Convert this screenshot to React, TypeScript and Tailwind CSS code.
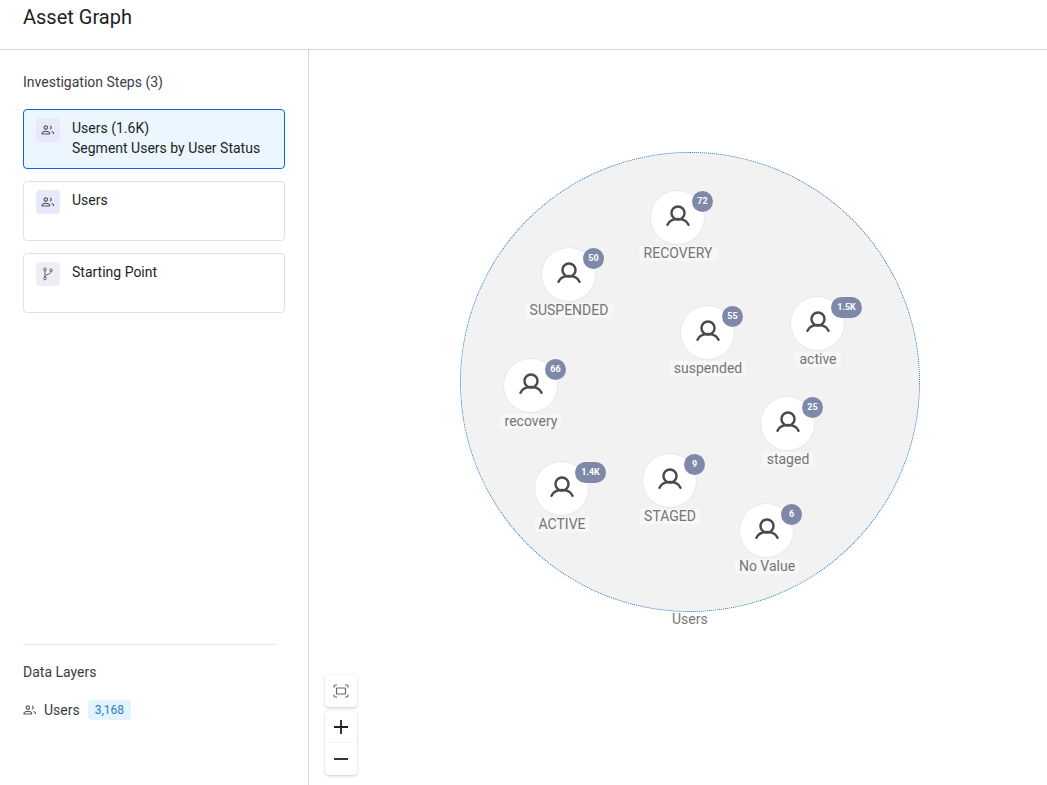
import React from 'react';

const FONT = "font-['Roboto',sans-serif]";

const UsersGlyph = ({ className }: { className?: string }) => (
  <svg viewBox="0 0 14 14" fill="none" stroke="currentColor" strokeWidth="1.2" className={className}>
    <circle cx="4.800" cy="4.600" r="1.700" />
    <path d="M9 3c.9.300 1.300.900 1.300 1.600S9.900 5.900 9 6.200" />
    <path d="M1 11v-.6c0-1.300 1.600-2 3.800-2s3.800.7 3.800 2v.6z" />
    <path d="M10.500 8.500c1.200.300 2.200.9 2.200 2.500" />
  </svg>
);

const BranchGlyph = ({ className }: { className?: string }) => (
  <svg viewBox="0 0 16 16" fill="none" stroke="currentColor" strokeWidth="1.100" className={className}>
    <circle cx="4.500" cy="2.800" r="1.500" />
    <circle cx="4.500" cy="13.200" r="1.500" />
    <circle cx="11.500" cy="3.800" r="1.500" />
    <path d="M4.500 4.300v7.400M11.500 5.300c0 3.200-7 2.700-7 6.400" />
  </svg>
);

const StepCard = ({
  active,
  icon,
  iconBg,
  title,
  sub,
}: {
  active?: boolean;
  icon: React.ReactNode;
  iconBg: string;
  title: string;
  sub?: string;
}) => (
  <div
    className={
      active
        ? 'flex h-[60px] gap-3 rounded border border-[#1662dd] bg-[#ebf6ff] px-3 py-2'
        : 'flex h-[60px] gap-3 rounded border border-[#dfe1e5] bg-white px-3 py-2'
    }
  >
    <div className={`flex h-6 w-6 shrink-0 items-center justify-center rounded ${iconBg} text-[#5a5d68]`}>{icon}</div>
    <div className="text-sm leading-5 text-[#1d1f24]">
      <div>{title}</div>
      {sub && <div>{sub}</div>}
    </div>
  </div>
);

const nodes = [
  { label: 'RECOVERY', count: '72', x: 678, y: 218 },
  { label: 'SUSPENDED', count: '50', x: 569, y: 275 },
  { label: 'suspended', count: '55', x: 708, y: 333 },
  { label: 'active', count: '1.5K', x: 818, y: 324 },
  { label: 'recovery', count: '66', x: 531, y: 386 },
  { label: 'staged', count: '25', x: 788, y: 424 },
  { label: 'ACTIVE', count: '1.4K', x: 562, y: 489 },
  { label: 'STAGED', count: '9', x: 670, y: 481 },
  { label: 'No Value', count: '6', x: 767, y: 531 },
];

const GraphNode = ({ label, count, x, y }: { label: string; count: string; x: number; y: number }) => {
  const wide = count.length > 2;
  return (
    <div className="absolute h-0 w-0" style={{ left: x - 309, top: y - 50 }}>
      <div className="absolute -left-[28px] -top-[28px] flex h-[55px] w-[55px] items-center justify-center rounded-full border border-[#e6e8f2] bg-white text-[#4a4a4a]">
        <svg viewBox="0 0 24 24" fill="none" stroke="currentColor" strokeWidth="2.100" strokeLinecap="round" className="-mt-1 h-7 w-7">
          <circle cx="12" cy="9.400" r="5.600" />
          <path d="M3 19.500c1.200-3 4.600-5 9-5s7.800 2 9 5" />
        </svg>
      </div>
      <div
        className={
          wide
            ? 'absolute left-[13px] -top-[27px] flex h-[21px] w-[31px] items-center justify-center rounded-full bg-[#7e89a9] text-[9px] font-bold text-white'
            : 'absolute left-[14px] -top-[27px] flex h-[21px] w-[21px] items-center justify-center rounded-full bg-[#7e89a9] text-[9px] font-bold text-white'
        }
      >
        {count}
      </div>
      <div className="absolute left-0 top-[28px] -translate-x-1/2 whitespace-nowrap bg-[#f7f7f7] px-1 text-sm leading-[15px] text-[#757575]">
        {label}
      </div>
    </div>
  );
};

export default function App() {
  return (
    <div className={`${FONT} flex h-[785px] w-[1047px] flex-col overflow-hidden bg-white`}>
      <header className="h-[50px] shrink-0 border-b border-[#d3d6e0] px-[23px] pt-[5px]">
        <h1 className="text-xl leading-6 text-[#1d1f24]">Asset Graph</h1>
      </header>
      <div className="flex min-h-0 flex-1">
        <aside className="flex w-[309px] shrink-0 flex-col border-r border-[#d3d6e0] pb-[65px] pl-[23px] pr-[23px] pt-6">
          <div className="text-sm leading-4 text-[#3a3d45]">Investigation Steps (3)</div>
          <div className="mt-[19px] flex flex-col gap-3">
            <StepCard
              active
              icon={<UsersGlyph className="h-[14px] w-[14px]" />}
              iconBg="bg-[#e7e9fb]"
              title="Users (1.6K)"
              sub="Segment Users by User Status"
            />
            <StepCard icon={<UsersGlyph className="h-[14px] w-[14px]" />} iconBg="bg-[#e7e9fb]" title="Users" />
            <StepCard icon={<BranchGlyph className="h-[14px] w-[14px]" />} iconBg="bg-[#eceef3]" title="Starting Point" />
          </div>
          <div className="mt-auto w-[252px] border-t border-[#dfe3ec] pt-[19px]">
            <div className="text-sm leading-4 text-[#3a3d45]">Data Layers</div>
            <div className="mt-5 flex items-center">
              <UsersGlyph className="h-[14px] w-[14px] text-[#5a5d68]" />
              <span className="ml-[7px] text-sm text-[#3a3d45]">Users</span>
              <span className="ml-2 rounded bg-[#e1f3fd] px-[7px] py-[2px] text-xs leading-4 text-[#2f7fc8]">3,168</span>
            </div>
          </div>
        </aside>
        <main className="relative flex-1">
          <div className="absolute left-[151px] top-[102px] h-[460px] w-[460px] rounded-full border border-dotted border-[#1f74c4] bg-[#f2f2f2]" />
          <div className="absolute left-[363px] top-[561px] text-sm leading-4 text-[#7a7a7a]">Users</div>
          {nodes.map((n) => (
            <GraphNode key={n.label} {...n} />
          ))}
          <div className="absolute left-[16px] top-[625px] flex flex-col gap-[4px]">
            <button className="flex h-8 w-8 items-center justify-center rounded bg-white text-[#5f6472] shadow-[0_1px_3px_rgba(0,0,0,0.2)]">
              <svg viewBox="0 0 16 16" fill="none" stroke="currentColor" strokeWidth="1.200" className="h-4 w-4">
                <rect x="3.500" y="5" width="9" height="6" rx="0.500" />
                <path d="M1 4.500V3.500C1 2.700 1.700 2 2.500 2H4M12 2h1.500C14.300 2 15 2.700 15 3.500V4.500M15 11.500v1c0 .8-.7 1.500-1.500 1.500H12M4 14H2.500C1.700 14 1 13.300 1 12.500V11.500" />
              </svg>
            </button>
            <div className="flex w-8 flex-col rounded bg-white text-[#1d1f24] shadow-[0_1px_3px_rgba(0,0,0,0.2)]">
              <button className="flex h-8 items-center justify-center border-b border-[#f7f7f7]">
                <svg viewBox="0 0 16 16" stroke="currentColor" strokeWidth="1.800" className="h-4 w-4">
                  <path d="M8 1v14M1 8h14" />
                </svg>
              </button>
              <button className="flex h-8 items-center justify-center">
                <svg viewBox="0 0 16 16" stroke="currentColor" strokeWidth="1.800" className="h-4 w-4">
                  <path d="M1 8h14" />
                </svg>
              </button>
            </div>
          </div>
        </main>
      </div>
    </div>
  );
}
